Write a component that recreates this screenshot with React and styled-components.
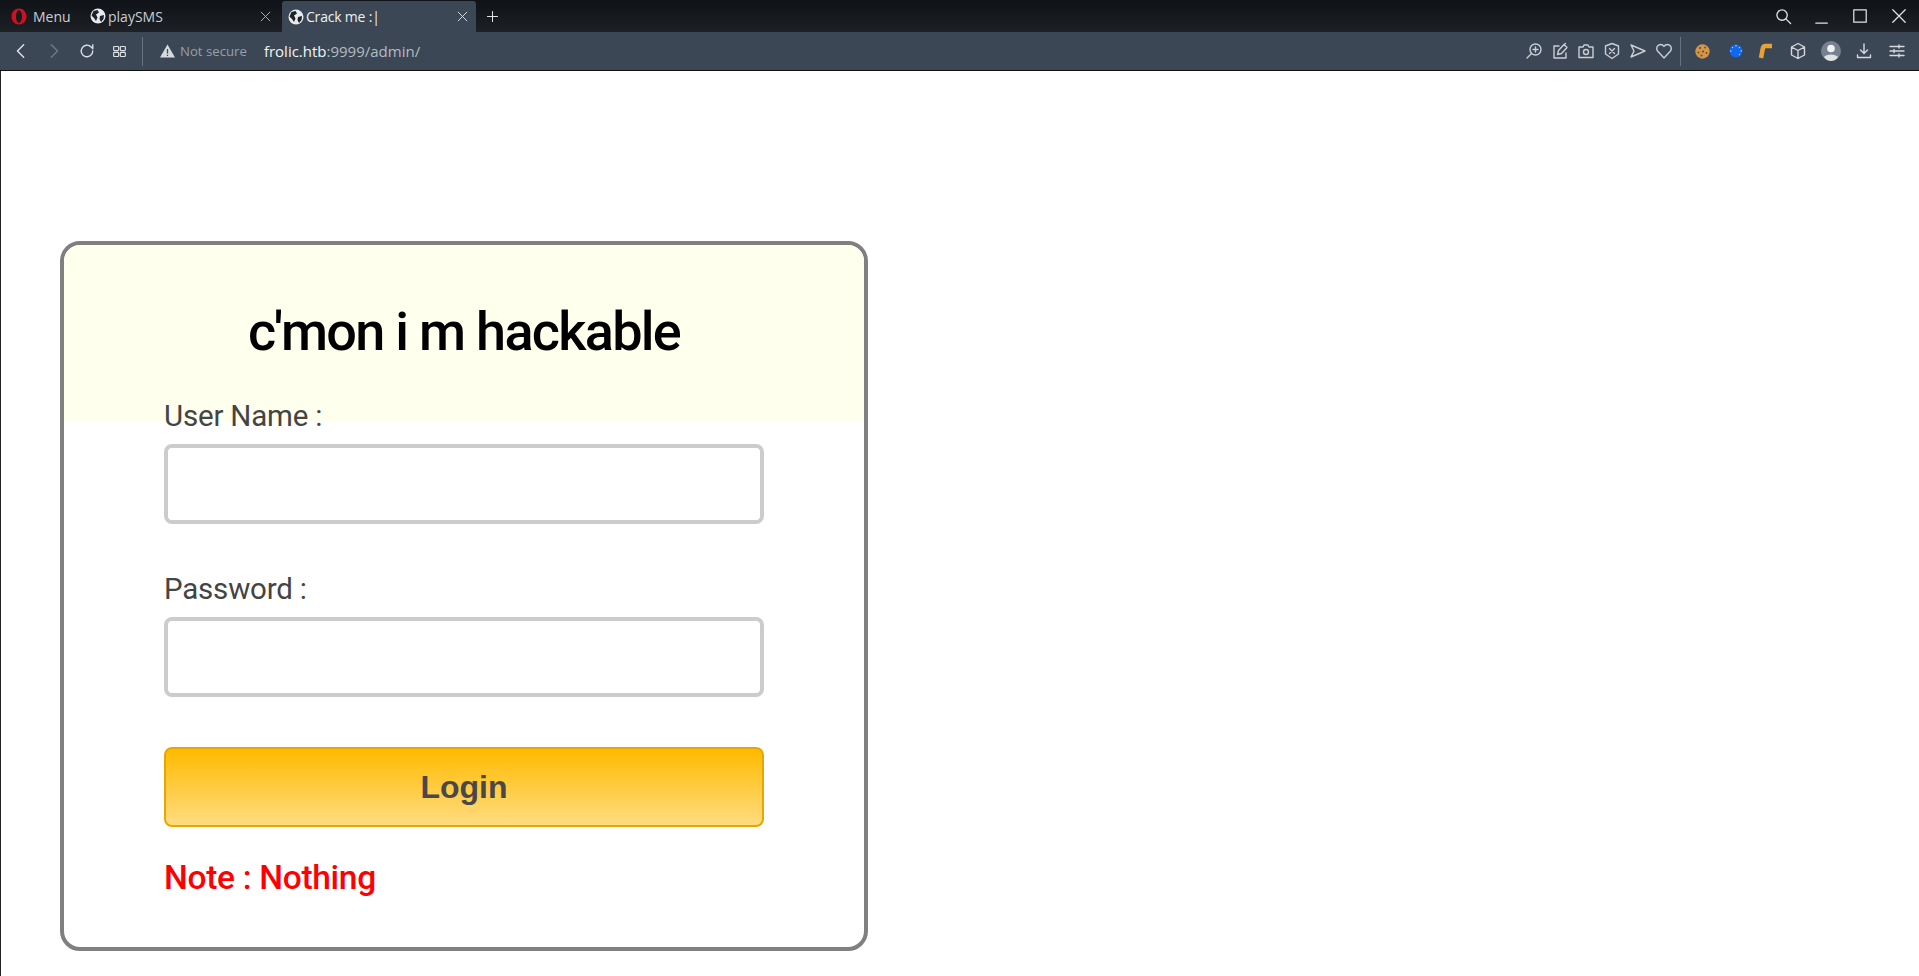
import React from "react";
import styled, { createGlobalStyle } from "styled-components";

const Global = createGlobalStyle`
  html, body { margin: 0; padding: 0; background: #fff; overflow: hidden; }
  body { font-family: "Liberation Sans", Arial, sans-serif; }
`;
const Page = styled.div`width: 1919px; height: 976px; display: flex; flex-direction: column; overflow: hidden;`;
const TabBar = styled.div`height: 32px; display: flex; align-items: stretch; background: linear-gradient(#0f1216, #1d2125); color: #d6dbe0; font: 14px "Open Sans", sans-serif;`;
const MenuBtn = styled.div`width: 86px; display: flex; align-items: center; gap: 6px; padding-left: 11px; box-sizing: border-box; font-size: 14px; color: #c9ced3;`;
const Tab = styled.div`width: ${p => p.$active ? "194px" : "196px"}; height: ${p => p.$active ? "31px" : "32px"}; margin-top: ${p => p.$active ? "1px" : "0"}; display: flex; align-items: center; gap: 2px; padding: ${p => p.$active ? "0 7px 0 6px" : "0 10px 0 4px"}; box-sizing: border-box; background: ${p => p.$active ? "#3b4755" : "transparent"}; border-radius: 3px 3px 0 0; color: ${p => p.$active ? "#eef0f2" : "#c8ced4"};`;
const TabTitle = styled.span`flex: 1; white-space: nowrap; letter-spacing: ${p => p.$tight ? "-0.2px" : "0"};`;
const PlusBox = styled.div`width: 32px; display: flex; align-items: center; justify-content: center;`;
const Spacer = styled.div`flex: 1;`;
const WinControls = styled.div`display: flex; align-items: center; padding-right: 1px;`;
const WinSlot = styled.div`width: 38.5px; display: flex; justify-content: center; align-items: center;`;
const Toolbar = styled.div`height: 38px; background: #3b4755; display: flex; align-items: center; border-bottom: 1px solid #0e1114; padding-right: 4px;`;
const NavGroup = styled.div`display: flex; align-items: center; padding-left: 4px; width: 142px; box-sizing: border-box;`;
const NavSlot = styled.div`width: 33px; display: flex; justify-content: center; align-items: center;`;
const Divider = styled.div`width: 1px; height: 29px; background: #69737e; margin-left: ${p => p.$ml || 0}px;`;
const Warn = styled.div`display: flex; align-items: center; gap: 5px; margin-left: 17px; color: #98a0a8; font: 13.2px "Open Sans", sans-serif;`;
const Url = styled.div`margin-left: 17px; font: 15px "Open Sans", sans-serif; color: #b4bbc2;`;
const Host = styled.span`color: #f2f4f5;`;
const Tools = styled.div`display: flex; align-items: center; margin-left: auto;`;
const ToolSlot = styled.div`width: ${p => p.$w || 26}px; display: flex; justify-content: center; align-items: center;`;
const Viewport = styled.div`flex: 1; background: #fff; border-left: 1px solid #222; padding: 170px 0 0 59px; box-sizing: border-box;`;
const Card = styled.div`width: 808px; height: 710px; box-sizing: border-box; border: 4px solid #808080; border-radius: 20px; overflow: hidden; position: relative;`;
const Header = styled.div`height: 176px; background: #ffffee; display: flex; justify-content: center; padding-top: 57px; box-sizing: border-box;`;
const Title = styled.h2`margin: 0; font: 500 54px/60px Roboto, sans-serif; color: #000; letter-spacing: -1.700px; white-space: nowrap;`;
const Form = styled.div`padding: 0 100px; margin-top: -18px; display: flex; flex-direction: column; position: relative;`;
const Label = styled.label`font: 400 29.500px/27px Roboto, sans-serif; color: #444; height: 41px; letter-spacing: -0.200px;`;
const Input = styled.input`display: block; width: 100%; height: 80px; box-sizing: border-box; border: 4px solid #ccc; border-radius: 8px; background: #fff; margin-bottom: 52px; outline: none;`;
const Login = styled.button`height: 80px; box-sizing: border-box; width: 100%; border: 2px solid #e6a800; border-radius: 8px; background: linear-gradient(#ffba00, #ffdc80); color: #484848; font: 700 32px "Liberation Sans", sans-serif; margin-top: -2px;`;
const Note = styled.div`margin-top: 29px; font: 500 33.500px/44px Roboto, sans-serif; color: #f00; letter-spacing: -0.300px;`;

const Icon = ({ children, s = 18, c = "#c9ced3", w = 1.4 }) => (
  <svg width={s} height={s} viewBox="0 0 18 18" fill="none" stroke={c} strokeWidth={w} strokeLinecap="round" strokeLinejoin="round">{children}</svg>
);
const Globe = () => (
  <svg width="16" height="16" viewBox="0 0 16 16">
    <circle cx="8" cy="8" r="7.500" fill="#e8ebee" />
    <path d="M3.500 3 7.500 2 9 4.500 6 6.500 7.500 9.500 6 13 4 10 1.500 7.500ZM10 8l4-1-.5 4-2.500 3-1.500-3z" fill="#1c2228" />
  </svg>
);
const Close = ({ c = "#aeb4ba" }) => <Icon s={13} c={c} w={1.3}><path d="M3 3 15 15M15 3 3 15" /></Icon>;

export default function App() {
  return (
    <Page>
      <Global />
      <TabBar>
        <MenuBtn>
          <svg width="16" height="17" viewBox="0 0 16 17"><path fillRule="evenodd" d="M8 .5C3.900.5.500 4 .500 8.500S3.900 16.500 8 16.500 15.500 13 15.500 8.500 12.100.5 8 .5ZM8 2.200c1.700 0 3 2.800 3 6.300s-1.300 6.300-3 6.300-3-2.800-3-6.300 1.300-6.300 3-6.300Z" fill="#cf1020" /></svg>
          Menu
        </MenuBtn>
        <Tab><Globe /><TabTitle>playSMS</TabTitle><Close /></Tab>
        <Tab $active><Globe /><TabTitle $tight>Crack me :|</TabTitle><Close c="#dfe3e6" /></Tab>
        <PlusBox><Icon s={13} c="#e0e3e6"><path d="M9 2v14M2 9h14" /></Icon></PlusBox>
        <Spacer />
        <WinControls>
          <WinSlot><Icon s={17} c="#e0e3e6"><circle cx="7.500" cy="7.500" r="5.500" /><path d="m11.500 11.500 5 5" /></Icon></WinSlot>
          <WinSlot><Icon s={16} c="#e0e3e6"><path d="M2 17h13" /></Icon></WinSlot>
          <WinSlot><Icon s={16} c="#e0e3e6"><rect x="2" y="2" width="14" height="14" /></Icon></WinSlot>
          <WinSlot><Icon s={16} c="#e0e3e6"><path d="M2 2 16 16M16 2 2 16" /></Icon></WinSlot>
        </WinControls>
      </TabBar>
      <Toolbar>
        <NavGroup>
          <NavSlot><Icon s={16} c="#dfe3e6" w={1.6}><path d="M12 2 5 9l7 7" /></Icon></NavSlot>
          <NavSlot><Icon s={16} c="#707a85" w={1.6}><path d="m6 2 7 7-7 7" /></Icon></NavSlot>
          <NavSlot><Icon s={16} c="#dfe3e6" w={1.5}><path d="M15.500 9a6.500 6.500 0 1 1-1.900-4.600L15.500 6.500V2" /></Icon></NavSlot>
          <NavSlot><Icon s={15} c="#dfe3e6"><rect x="2" y="3" width="6" height="5" rx="1" /><rect x="10" y="3" width="6" height="5" rx="1" /><rect x="2" y="10" width="6" height="5" rx="1" /><rect x="10" y="10" width="6" height="5" rx="1" /></Icon></NavSlot>
        </NavGroup>
        <Divider />
        <Warn>
          <svg width="15" height="14" viewBox="0 0 15 14"><path d="M7.500 0.500 15 13.500H0Z" fill="#d6dade" /><path d="M7.500 5v4.500M7.500 10.700v1.300" stroke="#3b4755" strokeWidth="1.300" /></svg>
          Not secure
        </Warn>
        <Url><Host>frolic.htb</Host>:9999/admin/</Url>
        <Tools>
          <ToolSlot><Icon><circle cx="10.500" cy="7.500" r="5.500" /><path d="M6.500 11.500 2 16M10.500 5v5M8 7.500h5" /></Icon></ToolSlot>
          <ToolSlot><Icon><path d="M8 4H3v12h12v-5M6.500 12.500l1-4 5.500-6 3 3-5.500 6zM12 3.500l2.500-2" /></Icon></ToolSlot>
          <ToolSlot><Icon><path d="M2 5h4l1-2h4l1 2h4v10.500H2z" /><circle cx="9" cy="10" r="2.500" /></Icon></ToolSlot>
          <ToolSlot><Icon><path d="M9 1.500 15.500 4v8L9 16.500 2.500 12V4z" /><path d="m6.500 6.500 5 5M11.500 6.500l-5 5" /></Icon></ToolSlot>
          <ToolSlot><Icon><path d="M2 3 16 9 2 15l3-6z" /></Icon></ToolSlot>
          <ToolSlot><Icon><path d="M9 16 2.500 9C.5 6 2.500 2.500 5.500 2.500 7 2.500 8.300 3.300 9 4.500 9.700 3.300 11 2.500 12.500 2.500c3 0 5 3.500 3 6.500z" /></Icon></ToolSlot>
          <Divider $ml={3} />
          <ToolSlot $w={42}>
            <svg width="15" height="15" viewBox="0 0 15 15"><circle cx="7.500" cy="7.500" r="7.200" fill="#d2974c" /><g fill="#7a4a1c"><circle cx="5" cy="4" r="1.100" /><circle cx="10" cy="3.500" r="0.900" /><circle cx="3.500" cy="8.500" r="1" /><circle cx="8" cy="7.500" r="1.100" /><circle cx="11.500" cy="9" r="1" /><circle cx="6.500" cy="11.500" r="1" /></g></svg>
          </ToolSlot>
          <ToolSlot $w={26}>
            <svg width="14" height="14" viewBox="0 0 14 14"><circle cx="7" cy="7" r="6.500" fill="#1068ee" /><g fill="#b8d2f8"><circle cx="1.800" cy="7" r="0.800" /><circle cx="12.200" cy="7" r="0.800" /><circle cx="7" cy="1.800" r="0.800" /><circle cx="10.500" cy="3.500" r="0.700" /><circle cx="3.500" cy="3.500" r="0.700" /><circle cx="10.500" cy="10.500" r="0.700" /></g></svg>
          </ToolSlot>
          <ToolSlot $w={34}>
            <svg width="16" height="16" viewBox="0 0 16 16"><path d="M3 15 4.800 5.500Q5.300 3 7.500 3H14" fill="none" stroke="#e9a232" strokeWidth="4.500" /></svg>
          </ToolSlot>
          <ToolSlot $w={30}><Icon c="#d5d9dd"><path d="M9 1.500 15.500 5v8L9 16.500 2.500 13V5zM2.500 5 9 8.500 15.500 5M9 8.500v8" /></Icon></ToolSlot>
          <ToolSlot $w={36}>
            <svg width="20" height="20" viewBox="0 0 20 20"><circle cx="10" cy="10" r="10" fill="#76818d" /><circle cx="10" cy="7.500" r="3.800" fill="#f0f2f4" /><path d="M3 16c2-3.500 12-3.500 14 0-2 3-5 4-7 4s-5-1-7-4z" fill="#dfe3e6" /></svg>
          </ToolSlot>
          <ToolSlot $w={30}><Icon c="#d5d9dd"><path d="M9 2v9M5.500 8 9 11.500 12.500 8M2.500 13v2.500h13V13" /></Icon></ToolSlot>
          <ToolSlot $w={36}><Icon c="#d5d9dd"><path d="M2 4.500h14M2 9h14M2 13.500h14M11 3v3M6 7.500v3M11 12v3" /></Icon></ToolSlot>
        </Tools>
      </Toolbar>
      <Viewport>
        <Card>
          <Header><Title>c'mon i m hackable</Title></Header>
          <Form>
            <Label>User Name :</Label>
            <Input />
            <Label>Password :</Label>
            <Input />
            <Login>Login</Login>
            <Note>Note : Nothing</Note>
          </Form>
        </Card>
      </Viewport>
    </Page>
  );
}
